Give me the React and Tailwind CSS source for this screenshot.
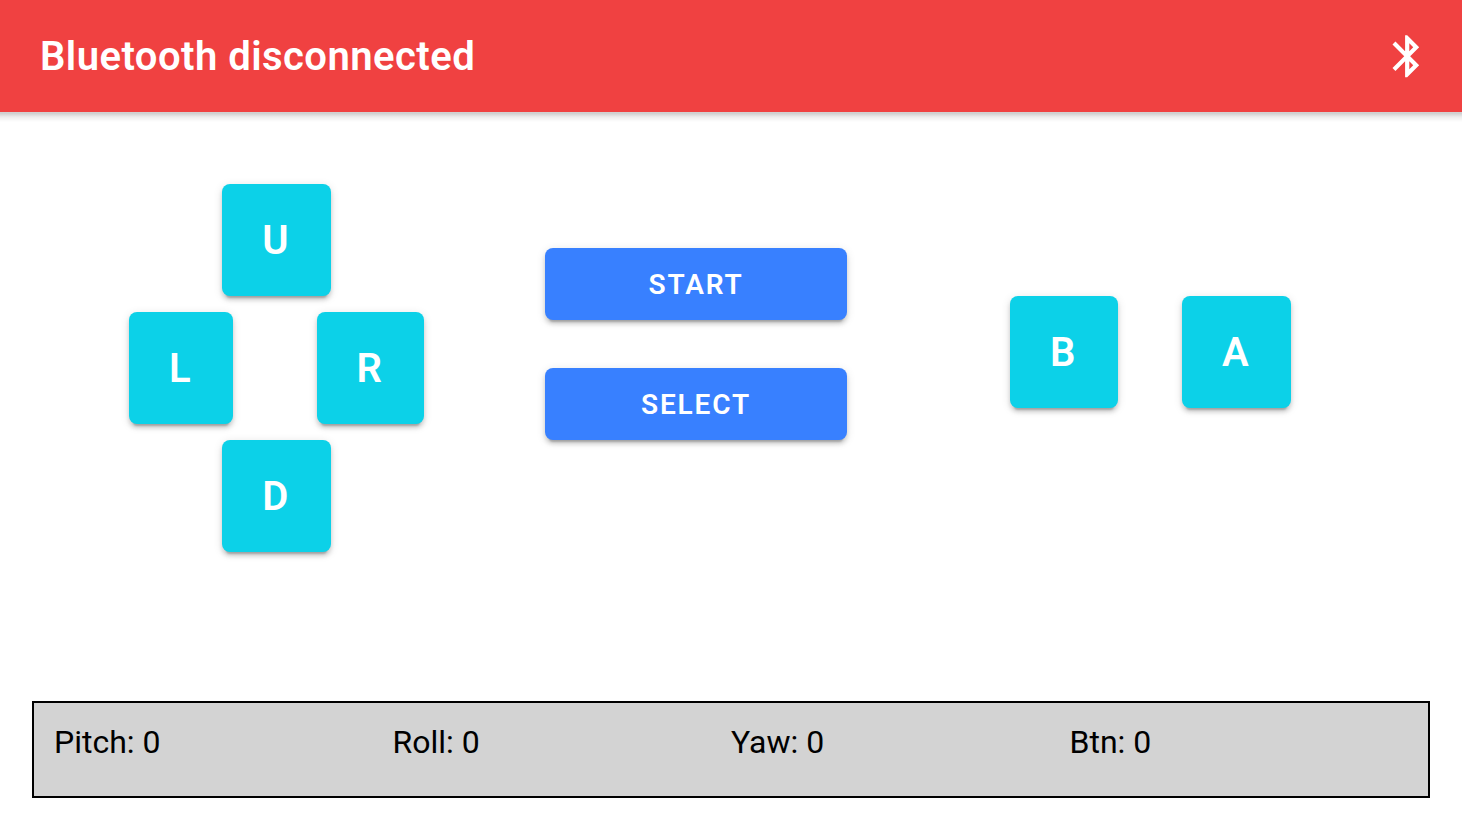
const raised =
  "shadow-[0_6px_2px_-4px_rgba(0,0,0,0.2),0_4px_4px_0_rgba(0,0,0,0.14),0_2px_10px_0_rgba(0,0,0,0.12)]";

function PadButton({ label, className }) {
  return (
    <button
      className={`h-28 shrink-0 rounded-lg bg-[#0cd1e8] pt-0.5 text-[40px] leading-none font-semibold tracking-[0.06em] text-white ${raised} ${className}`}
    >
      {label}
    </button>
  );
}

function WideButton({ label }) {
  return (
    <button
      className={`h-[72px] w-[302px] rounded-lg bg-[#3880ff] pt-0.5 text-[28px] leading-none font-semibold tracking-[0.066em] text-white ${raised}`}
    >
      {label}
    </button>
  );
}

function BluetoothIcon() {
  return (
    <svg viewBox="0 0 24 24" className="size-[50.4px] fill-white" aria-hidden="true">
      <path d="M17.71 7.71L12 2h-1v7.59L6.41 5 5 6.41 10.59 12 5 17.59 6.41 19 11 14.41V22h1l5.71-5.71-4.3-4.29 4.3-4.29zM13 5.83l1.88 1.88L13 9.59V5.83zm1.88 10.46L13 18.17v-3.76l1.88 1.88z" />
    </svg>
  );
}

const readings = [
  ["Pitch", 0],
  ["Roll", 0],
  ["Yaw", 0],
  ["Btn", 0],
];

export default function App() {
  return (
    <div className="flex h-[822px] w-full flex-col overflow-hidden bg-white font-['Roboto',sans-serif] text-black">
      <header className="flex h-28 shrink-0 items-center justify-between bg-[#f04141] pr-[30px] pl-10 text-white">
        <h1 className="pt-0.5 text-[40px] leading-none font-semibold tracking-[0.0115em]">Bluetooth disconnected</h1>
        <BluetoothIcon />
      </header>
      <div className="h-2.5 shrink-0 bg-linear-to-b from-black/18 from-15% via-black/7 to-transparent" />

      <main className="flex grow items-start pt-[62px] pl-[129px]">
        <div className="flex w-[295px] flex-col items-center gap-4">
          <PadButton label="U" className="w-[109px]" />
          <div className="flex w-full justify-between">
            <PadButton label="L" className="w-[104px]" />
            <PadButton label="R" className="w-[107px]" />
          </div>
          <PadButton label="D" className="w-[109px]" />
        </div>
        <div className="mt-16 ml-[121px] flex flex-col gap-12">
          <WideButton label="START" />
          <WideButton label="SELECT" />
        </div>
        <div className="mt-28 ml-[163px] flex gap-16">
          <PadButton label="B" className="w-[108px]" />
          <PadButton label="A" className="w-[109px]" />
        </div>
      </main>

      <footer className="mx-8 mb-6 grid h-[97px] shrink-0 grid-cols-4 border-2 border-black bg-[#d3d3d3] px-5 pt-5 text-[32px] leading-[38px] font-normal">
        {readings.map(([name, value]) => (
          <div key={name}>
            {name}: {value}
          </div>
        ))}
      </footer>
    </div>
  );
}
